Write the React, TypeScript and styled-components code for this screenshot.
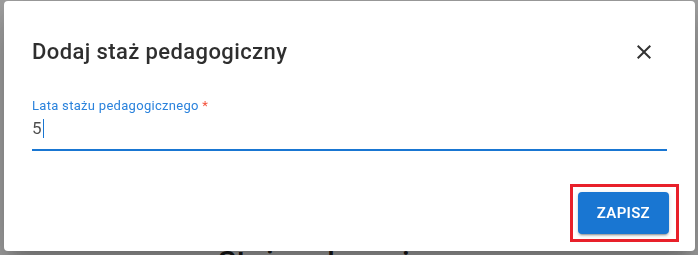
import React from "react"
import styled, { createGlobalStyle } from "styled-components"

const GlobalStyle = createGlobalStyle`
  html, body {
    margin: 0;
    padding: 0;
    background: #ffffff;
    font-family: Roboto, "Liberation Sans", Arial, sans-serif;
  }
  * {
    box-sizing: border-box;
  }
`

const Page = styled.div`
  width: 698px;
  height: 255px;
  overflow: hidden;
  padding: 244px 0 0 218px;
`

const PageHeading = styled.h2`
  margin: 0;
  font-size: 30px;
  line-height: 36px;
  font-weight: 500;
  color: #222222;
`

const Backdrop = styled.div`
  position: fixed;
  inset: 0;
  background: rgba(0, 0, 0, 0.37);
  display: flex;
  align-items: flex-start;
  padding: 1px 0 0 4px;
`

const Dialog = styled.div`
  width: 691px;
  height: 250px;
  background: #ffffff;
  border-radius: 4px;
  box-shadow: 0 11px 15px -7px rgba(0, 0, 0, 0.2), 0 24px 38px 3px rgba(0, 0, 0, 0.14), 0 9px 46px 8px rgba(0, 0, 0, 0.12);
  display: flex;
  flex-direction: column;
  padding: 31px 31px 0 28px;
`

const Header = styled.div`
  display: flex;
  align-items: center;
  justify-content: space-between;
  height: 40px;
`

const Title = styled.h2`
  margin: 0;
  font-size: 22px;
  line-height: 32px;
  font-weight: 500;
  letter-spacing: 0.4px;
  color: rgba(0, 0, 0, 0.82);
`

const CloseButton = styled.button`
  width: 40px;
  height: 40px;
  padding: 8px;
  border: none;
  background: transparent;
  border-radius: 50%;
  display: flex;
  align-items: center;
  justify-content: center;
  color: #333333;
  cursor: pointer;
`

const Field = styled.div`
  display: flex;
  flex-direction: column;
  margin-top: 26px;
  margin-right: -3px;
`

const Label = styled.label`
  font-size: 13px;
  line-height: 16px;
  color: #2a82dc;
  letter-spacing: 0.3px;
`

const Required = styled.span`
  color: #f4503a;
`

const InputBox = styled.div`
  margin-top: 2px;
  font-size: 17px;
  line-height: 24px;
  color: rgba(0, 0, 0, 0.7);
  padding-bottom: 9px;
  border-bottom: 2px solid #1976d2;
  display: flex;
  align-items: center;
`

const Caret = styled.span`
  display: inline-block;
  width: 1.5px;
  height: 19px;
  background: #1976d2;
  margin-left: 1px;
`

const Actions = styled.div`
  display: flex;
  justify-content: flex-end;
  margin-top: 33px;
  margin-right: -15px;
`

const Highlight = styled.div`
  border: 3px solid #e8202a;
  padding: 5px 7px 5px 5px;
  display: flex;
`

const PrimaryButton = styled.button`
  height: 42px;
  padding: 0 19px;
  border: none;
  border-radius: 4px;
  background: #1976d2;
  color: #ffffff;
  font-family: Roboto, "Liberation Sans", Arial, sans-serif;
  font-size: 15px;
  font-weight: 600;
  letter-spacing: 0.3px;
  text-transform: uppercase;
  box-shadow: 0 3px 1px -2px rgba(0, 0, 0, 0.2), 0 2px 2px 0 rgba(0, 0, 0, 0.14), 0 1px 5px 0 rgba(0, 0, 0, 0.12);
  cursor: pointer;
`

function CloseIcon() {
  return (
    <svg width="24" height="24" viewBox="0 0 24 24" fill="currentColor">
      <path d="M19 6.41 17.59 5 12 10.59 6.41 5 5 6.41 10.59 12 5 17.59 6.41 19 12 13.41 17.59 19 19 17.59 13.41 12z" />
    </svg>
  )
}

export default function App() {
  return (
    <>
      <GlobalStyle />
      <Page>
        <PageHeading>Staż pedagogiczny</PageHeading>
      </Page>
      <Backdrop>
        <Dialog>
          <Header>
            <Title>Dodaj staż pedagogiczny</Title>
            <CloseButton aria-label="close">
              <CloseIcon />
            </CloseButton>
          </Header>
          <Field>
            <Label>
              Lata stażu pedagogicznego <Required>*</Required>
            </Label>
            <InputBox>
              5<Caret />
            </InputBox>
          </Field>
          <Actions>
            <Highlight>
              <PrimaryButton>Zapisz</PrimaryButton>
            </Highlight>
          </Actions>
        </Dialog>
      </Backdrop>
    </>
  )
}
